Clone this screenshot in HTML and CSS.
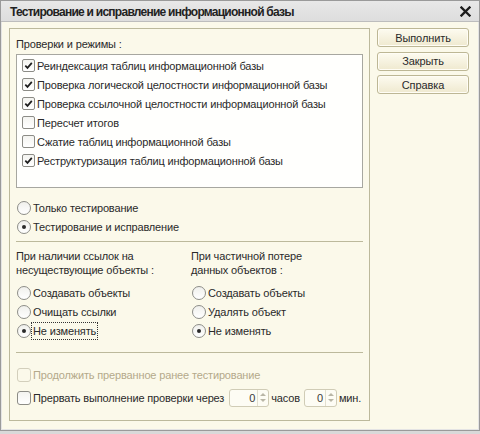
FILE: index.html
```html
<!DOCTYPE html>
<html lang="ru">
<head>
<meta charset="utf-8">
<title>Тестирование и исправление информационной базы</title>
<link rel="stylesheet" href="styles.css">
</head>
<body>
<div class="window">
  <div class="titlebar">
    <span class="title">Тестирование и исправление информационной базы</span>
    <svg class="close" width="11" height="11" viewBox="0 0 11 11"><path d="M1.5 1.5 L9.5 9.5 M9.5 1.5 L1.5 9.5" stroke="#1c1c1c" stroke-width="2.3" stroke-linecap="square"/></svg>
  </div>
  <div class="content">
    <div class="group">
      <div class="label">Проверки и режимы :</div>
      <div class="listbox">
        <label class="row"><span class="cb checked"><svg viewBox="0 0 11 11"><path d="M2.3 5.6 L4.5 7.9 L8.8 2.9" fill="none" stroke="#1e1e1e" stroke-width="1.7"/></svg></span>Реиндексация таблиц информационной базы</label>
        <label class="row"><span class="cb checked"><svg viewBox="0 0 11 11"><path d="M2.3 5.6 L4.5 7.9 L8.8 2.9" fill="none" stroke="#1e1e1e" stroke-width="1.7"/></svg></span>Проверка логической целостности информационной базы</label>
        <label class="row"><span class="cb checked"><svg viewBox="0 0 11 11"><path d="M2.3 5.6 L4.5 7.9 L8.8 2.9" fill="none" stroke="#1e1e1e" stroke-width="1.7"/></svg></span>Проверка ссылочной целостности информационной базы</label>
        <label class="row"><span class="cb"></span>Пересчет итогов</label>
        <label class="row"><span class="cb"></span>Сжатие таблиц информационной базы</label>
        <label class="row"><span class="cb checked"><svg viewBox="0 0 11 11"><path d="M2.3 5.6 L4.5 7.9 L8.8 2.9" fill="none" stroke="#1e1e1e" stroke-width="1.7"/></svg></span>Реструктуризация таблиц информационной базы</label>
      </div>
      <div class="modes">
        <div class="row"><span class="rb"></span>Только тестирование</div>
        <div class="row"><span class="rb on"></span>Тестирование и исправление</div>
      </div>
      <div class="sep"></div>
      <div class="cols">
        <div class="col">
          <div class="clabel">При наличии ссылок на<br>несуществующие объекты :</div>
          <div class="row"><span class="rb"></span>Создавать объекты</div>
          <div class="row"><span class="rb"></span>Очищать ссылки</div>
          <div class="row"><span class="rb on"></span><span class="focus">Не изменять</span></div>
        </div>
        <div class="col">
          <div class="clabel">При частичной потере<br>данных объектов :</div>
          <div class="row"><span class="rb"></span>Создавать объекты</div>
          <div class="row"><span class="rb"></span>Удалять объект</div>
          <div class="row"><span class="rb on"></span>Не изменять</div>
        </div>
      </div>
      <div class="sep sep2"></div>
      <div class="row outer disabled"><span class="cb"></span>Продолжить прерванное ранее тестирование</div>
      <div class="row outer interrupt"><span class="cb"></span>Прервать выполнение проверки через
        <span class="spin wide"><span class="val">0</span><span class="arrows"><i class="up"></i><i class="down"></i></span></span>
        <span class="unit">часов</span>
        <span class="spin narrow"><span class="val">0</span><span class="arrows"><i class="up"></i><i class="down"></i></span></span>
        <span class="unit">мин.</span>
      </div>
    </div>
    <div class="side">
      <button class="btn">Выполнить</button>
      <button class="btn">Закрыть</button>
      <button class="btn">Справка</button>
    </div>
  </div>
</div>
</body>
</html>
```

FILE: styles.css
```css
html, body {
  margin: 0;
  padding: 0;
}
body {
  background: #d9d9d9;
  width: 480px;
  height: 434px;
  overflow: hidden;
  font-family: "Liberation Sans", Arial, sans-serif;
  font-size: 11px;
  letter-spacing: -0.15px;
  color: #2a2a2a;
}
.window {
  width: 480px;
  height: 431px;
  box-sizing: border-box;
  border: 1px solid #9a9a9a;
  background: #fbf9ea;
  box-shadow: inset 1px 0 0 #e4e4e4, inset -1px 0 0 #e4e4e4, inset 0 -1px 0 #e4e4e4;
}
.titlebar {
  height: 20px;
  background: linear-gradient(#e8e8e8, #dddddd);
  border-bottom: 1px solid #bdbdbd;
  display: flex;
  align-items: center;
  justify-content: space-between;
  padding: 0 8px 0 9px;
}
.title {
  font-weight: bold;
  font-size: 12px;
  letter-spacing: -0.75px;
  color: #222;
  margin-top: 1px;
}
.close {
  display: block;
  margin-top: 1px;
}
.content {
  display: flex;
  padding: 6px 10px 0 8px;
  gap: 7px;
}
.group {
  width: 361px;
  height: 393px;
  box-sizing: border-box;
  border: 1px solid #bcb99c;
  padding: 8px 6px 0 6px;
}
.label {
  line-height: 15px;
  height: 15px;
}
.listbox {
  margin-top: 2px;
  height: 134px;
  box-sizing: border-box;
  border: 1px solid #a7a7a0;
  background: #fffffd;
  padding: 1px 5px;
}
.row {
  display: flex;
  align-items: center;
  height: 19px;
  white-space: nowrap;
}
.cb {
  width: 11px;
  height: 11px;
  border: 1px solid #8c8c86;
  border-radius: 2px;
  background: linear-gradient(#f4f4f0, #ffffff);
  margin-right: 2px;
  flex: none;
  display: flex;
}
.cb svg {
  width: 11px;
  height: 11px;
}
.modes {
  margin-top: 10px;
}
.rb {
  width: 12px;
  height: 12px;
  border: 1px solid #8d8d88;
  border-radius: 50%;
  background: linear-gradient(#f0f0ec, #ffffff);
  margin: 0 2px 0 1px;
  flex: none;
  display: flex;
  align-items: center;
  justify-content: center;
}
.rb.on::after {
  content: "";
  width: 4px;
  height: 4px;
  border-radius: 50%;
  background: #2a2a2a;
}
.sep {
  height: 1px;
  background: #bcb99c;
  margin-top: 5px;
}
.cols {
  display: grid;
  grid-template-columns: 175px 1fr;
  margin-top: 7px;
}
.clabel {
  line-height: 14px;
  margin-bottom: 6px;
}
.focus {
  outline: 1px dotted #333;
  outline-offset: 1px;
  line-height: 14px;
}
.sep2 {
  margin-top: 12px;
}
.outer .cb {
  margin-left: 1px;
  width: 12px;
  height: 12px;
  border-radius: 3px;
}
.disabled {
  margin-top: 12px;
  color: #b4a98a;
}
.disabled .cb {
  border-color: #d3cfbc;
  background: #fbf9ea;
}
.interrupt {
  margin-top: 4px;
  height: 19px;
}
.spin {
  display: inline-flex;
  align-items: stretch;
  height: 18px;
  box-sizing: border-box;
  border: 1px solid #d0ccb6;
  border-radius: 3px;
  background: #fdfcf4;
}
.spin.wide {
  width: 40px;
  margin-left: 5px;
}
.spin.narrow {
  width: 33px;
  margin-left: 4px;
}
.val {
  flex: 1;
  text-align: right;
  line-height: 16px;
  padding-right: 2px;
  color: #3a3a3a;
}
.arrows {
  width: 10px;
  border-left: 1px solid #e2dfcf;
  display: flex;
  flex-direction: column;
  align-items: center;
  justify-content: center;
  gap: 3px;
}
.arrows i {
  width: 0;
  height: 0;
  border-left: 3px solid transparent;
  border-right: 3px solid transparent;
}
.arrows .up {
  border-bottom: 3px solid #b9b6a6;
}
.arrows .down {
  border-top: 3px solid #b9b6a6;
}
.unit {
  margin-left: 2px;
}
.side {
  display: flex;
  flex-direction: column;
  gap: 4.5px;
  width: 92px;
}
.btn {
  height: 19px;
  box-sizing: border-box;
  border: 1px solid #bdb795;
  border-radius: 3px;
  background: linear-gradient(#fdfbf0, #efe9cf);
  box-shadow: inset 0 0 0 1px #fffdf5;
  font-family: "Liberation Sans", Arial, sans-serif;
  font-size: 11px;
  letter-spacing: -0.1px;
  color: #2a2a2a;
  padding: 0;
}
```
